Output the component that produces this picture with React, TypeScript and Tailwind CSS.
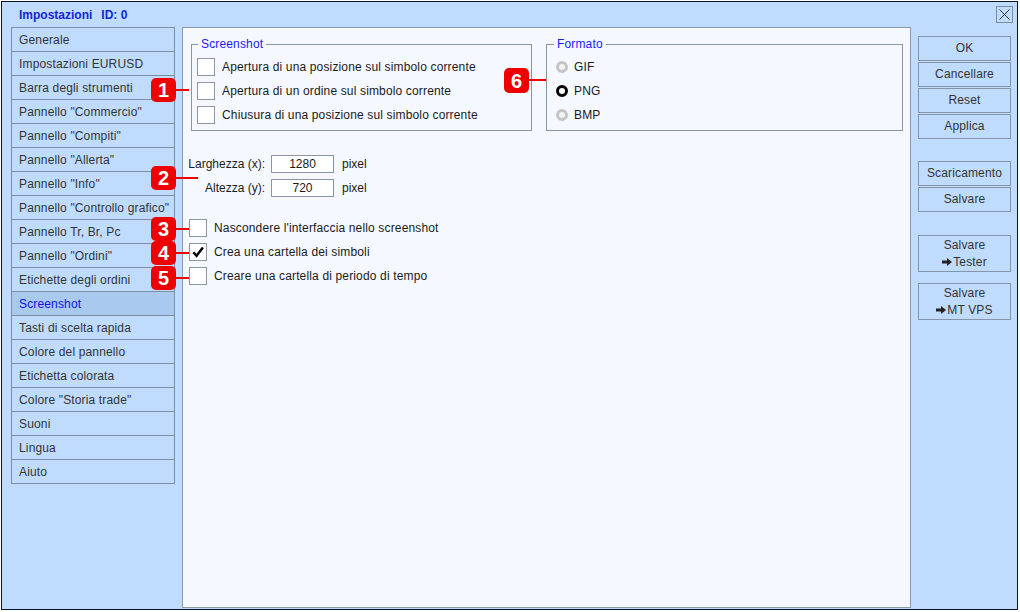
import React from "react";

const MENU = [
  "Generale",
  "Impostazioni EURUSD",
  "Barra degli strumenti",
  'Pannello "Commercio"',
  'Pannello "Compiti"',
  'Pannello "Allerta"',
  'Pannello "Info"',
  'Pannello "Controllo grafico"',
  "Pannello Tr, Br, Pc",
  'Pannello "Ordini"',
  "Etichette degli ordini",
  "Screenshot",
  "Tasti di scelta rapida",
  "Colore del pannello",
  "Etichetta colorata",
  'Colore "Storia trade"',
  "Suoni",
  "Lingua",
  "Aiuto",
];

function CheckBox({ checked = false }: { checked?: boolean }) {
  return (
    <span className="flex h-[18px] w-[18px] shrink-0 items-center justify-center border border-[#8d97a3] bg-white">
      {checked && (
        <svg width="14" height="14" viewBox="0 0 14 14">
          <path d="M2.3 7.2 L5.6 10.8 L11.9 2.6" fill="none" stroke="#000" strokeWidth="2.4" />
        </svg>
      )}
    </span>
  );
}

function Radio({ on = false }: { on?: boolean }) {
  return on ? (
    <span className="h-[12px] w-[12px] shrink-0 rounded-full border-[3px] border-black bg-white" />
  ) : (
    <span className="h-[12px] w-[12px] shrink-0 rounded-full border-[3px] border-[#c4c4c4] bg-[#f2f2f2]" />
  );
}

function Arrow() {
  return (
    <svg width="10" height="8" viewBox="0 0 10 8" className="mr-[1px] inline-block">
      <path d="M0 2.5 H5 V0 L10 4 L5 8 V5.5 H0 Z" fill="#222" />
    </svg>
  );
}

function Btn({ children, tall = false }: { children: React.ReactNode; tall?: boolean }) {
  return (
    <div
      className={`flex w-full flex-col items-center justify-center border border-[#8594a6] bg-[#bfdcff] text-[12px] leading-[17px] tracking-[0.15px] text-[#333] ${
        tall ? "h-[37px]" : "h-[25px]"
      }`}
    >
      {children}
    </div>
  );
}

function Badge({ n, x, y, lineTo, h = 24 }: { n: number; x: number; y: number; lineTo: number; h?: number }) {
  const lineY = y + Math.floor(h / 2) - 1;
  return (
    <>
      <div
        className="absolute flex w-[25px] items-center justify-center rounded-[5px] bg-[#ef0000] text-[20px] font-bold leading-none text-white"
        style={{ left: x, top: y, height: h }}
      >
        {n}
      </div>
      <div className="absolute h-[2px] bg-[#ef0000]" style={{ left: x + 25, top: lineY, width: lineTo - x - 25 }} />
    </>
  );
}

export default function App() {
  return (
    <div
      className="relative h-[612px] w-[1020px] overflow-hidden bg-white"
      style={{ fontFamily: '"Liberation Sans", Arial, sans-serif' }}
    >
      <div className="ml-[1px] mt-[1px] flex h-[609px] w-[1017px] flex-col border border-[#0b1420] bg-[#bfdcff]">
        {/* title bar */}
        <div className="flex h-[25px] shrink-0 items-center pl-[17px] pr-[4px]">
          <span className="text-[12px] font-bold text-[#1424d8]">Impostazioni</span>
          <span className="ml-[9px] text-[12px] font-bold text-[#1424d8]">ID: 0</span>
          <div className="ml-auto flex h-[17px] w-[17px] items-center justify-center border border-[#7d8c9e]">
            <svg width="13" height="13" viewBox="0 0 13 13">
              <path d="M1.5 1.5 L11.5 11.5 M11.5 1.5 L1.5 11.5" stroke="#333" strokeWidth="1" />
            </svg>
          </div>
        </div>

        <div className="flex flex-1 pl-[9px]">
          {/* section menu */}
          <div className="w-[164px] shrink-0 self-start border-b border-[#7f8da0]">
            {MENU.map((m) => {
              const sel = m === "Screenshot";
              return (
                <div
                  key={m}
                  className={`flex h-[24px] items-center border-x border-t border-[#7f8da0] pl-[7px] text-[12px] tracking-[0.15px] whitespace-nowrap ${
                    sel ? "bg-[#a9c9ee] text-[#1010e0]" : "text-[#333]"
                  }`}
                >
                  {m}
                </div>
              );
            })}
          </div>

          {/* settings page */}
          <div className="ml-[7px] h-[581px] w-[729px] shrink-0 border border-[#8a98aa] bg-[#f5f9ff] text-[12px] tracking-[0.15px] text-[#1a1a1a]">
            <div className="ml-[8px] mt-[9px] flex">
              <fieldset className="w-[341px] border border-[#8a96a4]">
                <legend className="ml-[6px] px-[3px] text-[12px] leading-[14px] text-[#1a1aff]">Screenshot</legend>
                <div className="mt-[4px] pb-[3px] pl-[5px]">
                  {[
                    "Apertura di una posizione sul simbolo corrente",
                    "Apertura di un ordine sul simbolo corrente",
                    "Chiusura di una posizione sul simbolo corrente",
                  ].map((t) => (
                    <div key={t} className="flex h-[24px] items-center gap-[7px] whitespace-nowrap">
                      <CheckBox />
                      <span>{t}</span>
                    </div>
                  ))}
                </div>
              </fieldset>

              <fieldset className="ml-[14px] w-[357px] border border-[#8a96a4]">
                <legend className="ml-[7px] px-[3px] text-[12px] leading-[14px] text-[#1a1aff]">Formato</legend>
                <div className="mt-[4px] pb-[3px] pl-[9px]">
                  {[
                    ["GIF", false],
                    ["PNG", true],
                    ["BMP", false],
                  ].map(([t, on]) => (
                    <div key={t as string} className="flex h-[24px] items-center gap-[6px]">
                      <Radio on={on as boolean} />
                      <span>{t as string}</span>
                    </div>
                  ))}
                </div>
              </fieldset>
            </div>

            {/* capture size */}
            <div className="ml-[4px] mt-[21px] tracking-normal">
              {[
                ["Larghezza (x):", "1280"],
                ["Altezza (y):", "720"],
              ].map(([l, v]) => (
                <div key={l} className="flex h-[24px] items-center">
                  <span className="w-[78px] text-right whitespace-nowrap">{l}</span>
                  <span className="ml-[6px] flex h-[18px] w-[63px] items-center justify-center border border-[#8a96a4] bg-white">
                    {v}
                  </span>
                  <span className="ml-[8px]">pixel</span>
                </div>
              ))}
            </div>

            {/* capture options */}
            <div className="ml-[6px] mt-[16px]">
              {[
                ["Nascondere l'interfaccia nello screenshot", false],
                ["Crea una cartella dei simboli", true],
                ["Creare una cartella di periodo di tempo", false],
              ].map(([t, c]) => (
                <div key={t as string} className="flex h-[24px] items-center gap-[7px] whitespace-nowrap">
                  <CheckBox checked={c as boolean} />
                  <span>{t as string}</span>
                </div>
              ))}
            </div>
          </div>

          {/* action buttons */}
          <div className="ml-[7px] w-[93px] shrink-0 pt-[9px]">
            <div className="flex flex-col gap-[1px]">
              <Btn>OK</Btn>
              <Btn>Cancellare</Btn>
              <Btn>Reset</Btn>
              <Btn>Applica</Btn>
            </div>
            <div className="mt-[22px] flex flex-col gap-[1px]">
              <Btn>Scaricamento</Btn>
              <Btn>Salvare</Btn>
            </div>
            <div className="mt-[23px]">
              <Btn tall>
                <span>Salvare</span>
                <span className="flex items-center">
                  <Arrow />
                  Tester
                </span>
              </Btn>
            </div>
            <div className="mt-[11px]">
              <Btn tall>
                <span>Salvare</span>
                <span className="flex items-center">
                  <Arrow />
                  MT VPS
                </span>
              </Btn>
            </div>
          </div>
        </div>
      </div>

      {/* callout markers */}
      <Badge n={1} x={151} y={78} lineTo={189} />
      <Badge n={2} x={151} y={166} lineTo={198} />
      <Badge n={3} x={151} y={217} lineTo={189} />
      <Badge n={4} x={151} y={241} lineTo={189} />
      <Badge n={5} x={151} y={266} lineTo={189} />
      <Badge n={6} x={504} y={68} lineTo={546} h={25} />
    </div>
  );
}
